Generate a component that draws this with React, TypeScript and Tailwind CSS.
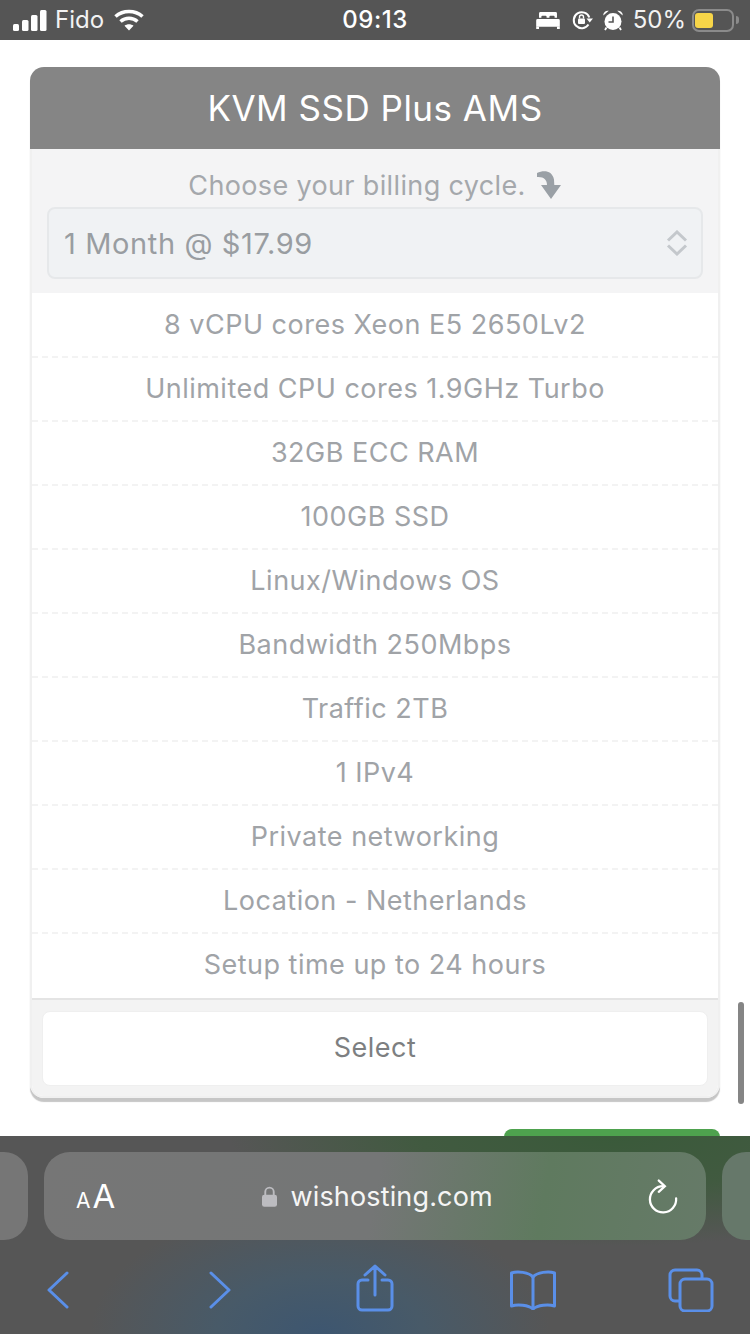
const font = { fontFamily: "Inter, 'Noto Sans', sans-serif" };

const rows = [
  "8 vCPU cores Xeon E5 2650Lv2",
  "Unlimited CPU cores 1.9GHz Turbo",
  "32GB ECC RAM",
  "100GB SSD",
  "Linux/Windows OS",
  "Bandwidth 250Mbps",
  "Traffic 2TB",
  "1 IPv4",
  "Private networking",
  "Location - Netherlands",
  "Setup time up to 24 hours",
];

function Signal() {
  return (
    <svg width="34" height="21" viewBox="0 0 34 21" fill="#fff">
      <rect x="0" y="14" width="6" height="7" rx="1.500" />
      <rect x="9" y="10" width="6.500" height="11" rx="1.500" />
      <rect x="18" y="5" width="6.500" height="16" rx="1.500" />
      <rect x="27" y="0" width="6.500" height="21" rx="1.500" />
    </svg>
  );
}

function Wifi() {
  return (
    <svg width="30" height="22" viewBox="0 0 30 22" fill="none" stroke="#fff" strokeWidth="3.600">
      <path d="M1.500 7.500C9 .8 21 .8 28.500 7.500" />
      <path d="M6.500 12.500C11.500 8.200 18.500 8.200 23.500 12.500" />
      <path d="M15 21.500L10.500 16.800C13 14.800 17 14.800 19.500 16.800Z" fill="#fff" stroke="none" />
    </svg>
  );
}

function Bed() {
  return (
    <svg width="24" height="17" viewBox="0 0 25 18" fill="#fff">
      <path d="M3 1.500A1.500 1.500 0 0 1 4.500 0h16A1.500 1.500 0 0 1 22 1.500V6h-2.500V5a1 1 0 0 0-1-1h-3.500a1 1 0 0 0-1 1v1h-3V5a1 1 0 0 0-1-1H6.500a1 1 0 0 0-1 1v1H3Z" />
      <path d="M1.500 7.500h22A1.500 1.500 0 0 1 25 9v6.500H0V9a1.500 1.500 0 0 1 1.500-1.500Z" />
      <rect x="0" y="15.500" width="3" height="2.500" />
      <rect x="22" y="15.500" width="3" height="2.500" />
    </svg>
  );
}

function RotationLock() {
  return (
    <svg width="22" height="20" viewBox="0 0 22 20" fill="none">
      <path d="M16.500 14.500A8 8 0 1 1 17.300 7.500" stroke="#fff" strokeWidth="2" />
      <path d="M14.500 8.500H21L17.700 12.500Z" fill="#fff" />
      <rect x="6" y="8.500" width="7" height="5.500" rx="1" fill="#fff" />
      <path d="M7.500 8.500V7a2 2 0 0 1 4 0v1.500" stroke="#fff" strokeWidth="1.400" />
    </svg>
  );
}

function Alarm() {
  return (
    <svg width="20" height="21" viewBox="0 0 20 21" fill="#fff">
      <path d="M.3 5.500A4.500 4.500 0 0 1 5.800 .8Z" />
      <path d="M19.700 5.500A4.500 4.500 0 0 0 14.200 .8Z" />
      <circle cx="10" cy="11.500" r="8.500" />
      <path d="M10 6.500v5.500H5.500" fill="none" stroke="#555" strokeWidth="1.600" />
      <path d="M3.500 17.500 2 20M16.500 17.500 18 20" stroke="#fff" strokeWidth="1.800" />
    </svg>
  );
}

function Battery() {
  return (
    <div className="flex items-center gap-[2px]">
      <div className="h-[23px] w-[42px] rounded-[7px] border-2 border-[#8b8b8b] px-[1px] py-[2px]">
        <div className="h-full w-[18px] rounded-[3px] bg-[#f7d548]" />
      </div>
      <div className="h-[8px] w-[3px] rounded-r-full bg-[#8b8b8b]" />
    </div>
  );
}

function StatusBar() {
  return (
    <div className="flex h-10 items-center bg-[#555555] px-[11px] text-white">
      <div className="flex flex-1 items-center">
        <span className="ml-[2px]"><Signal /></span>
        <span className="ml-[8px] text-[24px] font-normal leading-none text-[#f2f2f2]">Fido</span>
        <span className="ml-[10px]"><Wifi /></span>
      </div>
      <span className="text-[24px] font-medium leading-none tracking-[0.5px]">09:13</span>
      <div className="flex flex-1 items-center justify-end">
        <Bed />
        <span className="ml-[12px]"><RotationLock /></span>
        <span className="ml-[9px]"><Alarm /></span>
        <span className="ml-[10px] text-[24px] leading-none text-[#f2f2f2]">50%</span>
        <span className="ml-[6px]"><Battery /></span>
      </div>
    </div>
  );
}

function Card() {
  return (
    <div className="mx-[30px] mt-[27px] rounded-[14px] bg-white shadow-[0_4px_1px_#c6c6c6]">
      <div className="flex h-[82px] items-center justify-center rounded-t-[14px] bg-[#858585] text-[35px] font-normal tracking-[0.5px] text-white">
        KVM SSD Plus AMS
      </div>
      <div className="rounded-b-[14px] border-x-2 border-b-2 border-[#f0f0f0]">
        <div className="h-[144px] bg-[#f4f4f5] px-[15px] pt-[18px]">
          <div className="flex h-[36px] items-center justify-center text-[27px] leading-none tracking-[0.36px] text-[#a5a8ac]">
            Choose your billing cycle.
            <svg className="ml-[10px]" width="26" height="30" viewBox="0 0 26 30" fill="#9aa0a6">
              <path d="M1 3C8 0 16 .5 18 9.500L18.300 15H25L15 29 5 15H11C11 10 8 6.500 1 7Z" />
            </svg>
          </div>
          <div className="mt-[4px] flex h-[72px] items-center justify-between rounded-[8px] border-2 border-[#e6e8ea] bg-[#f0f2f4] pl-[15px] pr-[13px] text-[29px] tracking-[0.62px] text-[#999da1]">
            <span className="pt-[2px]">1 Month @ $17.99</span>
            <svg width="22" height="26" viewBox="0 0 22 26" fill="none" stroke="#c4c8cc" strokeWidth="3">
              <path d="M2 10.500 11 2 20 10.500" />
              <path d="M2 15.500 11 24 20 15.500" />
            </svg>
          </div>
        </div>
        <ul className="pt-[1px]">
          {rows.map((r, i) => (
            <li
              key={r}
              className={
                "flex h-[64px] items-center justify-center border-b-2 border-dashed text-[27px] tracking-[0.49px] text-[#a0a3a7] " +
                (i < rows.length - 1 ? "border-[#f3f3f3]" : "border-transparent")
              }
            >
              {r}
            </li>
          ))}
        </ul>
        <div className="rounded-b-[12px] border-t-2 border-[#e4e4e4] bg-[#f3f3f3] px-[10px] pb-[10px] pt-[11px]">
          <div className="flex h-[75px] items-center justify-center rounded-[8px] border border-[#efefef] bg-white text-[27px] tracking-[0.5px] text-[#7d7f81]">
            Select
          </div>
        </div>
      </div>
    </div>
  );
}

function Toolbar() {
  return (
    <div className="absolute inset-x-0 bottom-0 h-[198px] bg-[radial-gradient(ellipse_230px_130px_at_320px_198px,#3d5670_0%,#485a68_45%,transparent_100%),radial-gradient(ellipse_380px_110px_at_610px_0px,#3a5a3a_0%,#415a40_50%,transparent_100%),linear-gradient(#565656,#565656)]">
      <div className="mt-[16px] flex h-[88px] items-center gap-[16px] overflow-hidden">
        <div className="h-full w-[28px] shrink-0 rounded-r-[24px] bg-[#767676]" />
        <div className="flex h-full flex-1 items-center justify-between rounded-[26px] bg-[linear-gradient(100deg,#767676_0%,#747676_50%,#5f7a5f_75%,#667a68_100%)] pl-[32px] pr-[28px] text-white">
          <span className="flex items-baseline leading-none">
            <span className="text-[21px]">A</span>
            <span className="ml-[2px] text-[33px]">A</span>
          </span>
          <span className="mr-[8px] flex items-center text-[27px] leading-none tracking-[0.15px] text-[#f5f5f5]">
            <svg className="mr-[13px]" width="15" height="21" viewBox="0 0 16 22" fill="#bcbcc0">
              <rect x="0" y="9" width="16" height="13" rx="2.500" />
              <path d="M3.500 10V6a4.500 4.500 0 0 1 9 0v4" fill="none" stroke="#bcbcc0" strokeWidth="2" />
            </svg>
            wishosting.com
          </span>
          <svg width="30" height="35" viewBox="0 0 32 37" fill="none" stroke="#fff" strokeWidth="2.400" strokeLinecap="round">
            <path d="M30 20.500A14 14 0 1 1 16 7.500" />
            <path d="M11.500 1.500 18 7.500 11.500 13.500" />
          </svg>
        </div>
        <div className="h-full w-[28px] shrink-0 rounded-l-[24px] bg-[#66786a]" />
      </div>
      <div className="flex h-[94px] items-center pl-[47px] pt-[5px] text-[#5a8fe8]">
        <svg width="22" height="38" viewBox="0 0 22 38" fill="none" stroke="currentColor" strokeWidth="3" strokeLinecap="round" strokeLinejoin="round">
          <path d="M20 2 2 19 20 36" />
        </svg>
        <svg className="ml-[140px]" width="22" height="38" viewBox="0 0 22 38" fill="none" stroke="currentColor" strokeWidth="3" strokeLinecap="round" strokeLinejoin="round">
          <path d="M2 2 20 19 2 36" />
        </svg>
        <svg className="-mt-[3px] ml-[125px]" width="38" height="48" viewBox="0 0 38 48" fill="none" stroke="currentColor" strokeWidth="3" strokeLinecap="round" strokeLinejoin="round">
          <path d="M19 31V2M9 11 19 2 29 11" />
          <path d="M12 16H6a4 4 0 0 0-4 4v22a4 4 0 0 0 4 4h26a4 4 0 0 0 4-4V20a4 4 0 0 0-4-4h-6" />
        </svg>
        <svg className="ml-[115px]" width="48" height="40" viewBox="0 0 48 40" fill="none" stroke="currentColor" strokeWidth="3" strokeLinecap="round" strokeLinejoin="round">
          <path d="M24 7C20 2 8 1 2.500 3v33c6-2 17-1 21.500 3 4.500-4 15.500-5 21.500-3V3C40 1 28 2 24 7Z" />
          <path d="M24 7v31" />
        </svg>
        <svg className="ml-[111px]" width="46" height="44" viewBox="0 0 46 44" fill="none" stroke="currentColor" strokeWidth="3" strokeLinejoin="round">
          <path d="M11 33H7a5 5 0 0 1-5-5V7a5 5 0 0 1 5-5h22a5 5 0 0 1 5 5v4" />
          <rect x="12" y="11" width="32" height="32" rx="5" />
        </svg>
      </div>
    </div>
  );
}

export default function App() {
  return (
    <div className="relative h-[1334px] w-[750px] overflow-hidden bg-white" style={font}>
      <StatusBar />
      <Card />
      <div className="ml-[504px] mt-[31px] h-[60px] w-[216px] rounded-[8px] bg-[#4ea24e]" />
      <div className="absolute left-[738px] top-[1002px] h-[102px] w-[6px] rounded-full bg-[#858585]" />
      <Toolbar />
    </div>
  );
}
